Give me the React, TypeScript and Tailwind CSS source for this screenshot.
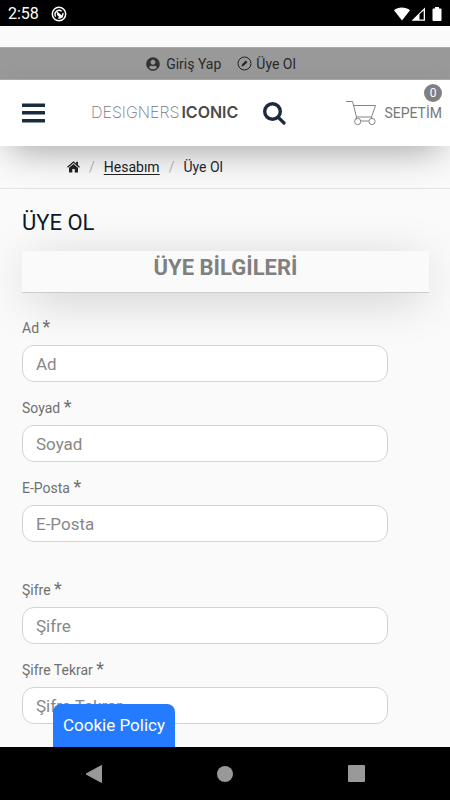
import React from "react";
import { FaUserCircle } from "react-icons/fa";

interface Field {
  id: string;
  label: string;
  type: string;
}

const personalFields: Field[] = [
  { id: "firstname", label: "Ad", type: "text" },
  { id: "lastname", label: "Soyad", type: "text" },
  { id: "email", label: "E-Posta", type: "email" },
];

const passwordFields: Field[] = [
  { id: "password", label: "Şifre", type: "password" },
  { id: "confirm", label: "Şifre Tekrar", type: "password" },
];

const StatusBar = () => (
  <div className="flex h-[26px] shrink-0 items-center bg-black px-2 pt-px text-white">
    <span className="text-base leading-5">2:58</span>
    <svg className="ml-3 size-4" viewBox="0 0 16 16" fill="none" stroke="currentColor">
      <circle cx="8" cy="8" r="6.7" strokeWidth="1.5" />
      <path d="M4.7 10.6a4.1 4.1 0 0 1 6-5.4M11.8 7a4.1 4.1 0 0 1-4.6 5" strokeWidth="1.4" />
      <path d="M6 6.3l5.6 4.9M6.3 8.2l3.2 2.9" strokeWidth="1.6" />
    </svg>
    <svg className="ml-auto h-4 w-[50px]" viewBox="0 0 50 16" fill="currentColor">
      <path d="M2 4.300C6 .6 13.500 .6 18 4.300L10 14.500z" />
      <path d="M33 1.500V14.700H19.500z" />
      <path d="M27.500 8.300L31.700 4.500V13.400H27.500z" fill="#000" />
      <path d="M43 2.500V1h4v1.500h1.500a1 1 0 0 1 1 1V14a1 1 0 0 1-1 1h-7a1 1 0 0 1-1-1V3.500a1 1 0 0 1 1-1z" />
    </svg>
  </div>
);

const MenuIcon = () => (
  <svg width="23" height="20" viewBox="0 0 23 20" fill="#1b2a3c">
    <rect y="0.500" width="23" height="3.500" rx="0.500" />
    <rect y="8" width="23" height="3.500" rx="0.500" />
    <rect y="16" width="23" height="3.500" rx="0.500" />
  </svg>
);

const SearchIcon = () => (
  <svg width="23" height="23" viewBox="0 0 23 23" fill="none" stroke="#1b2a3c">
    <circle cx="9.5" cy="9.500" r="7.800" strokeWidth="3.400" />
    <path d="M15.300 15.300L21 21" strokeWidth="3.200" strokeLinecap="round" />
  </svg>
);

const CartIcon = () => (
  <svg width="30" height="26" viewBox="0 0 30 26" fill="none" stroke="#777" strokeWidth="0.9">
    <path d="M0 1.500H6.500L10.500 17H25.500L29.500 5.500H7.500" />
    <path d="M10.500 17L9.800 19.500M25.500 17L26 18.500M14.800 21H22.800" />
    <circle cx="11.700" cy="21.500" r="3.100" />
    <circle cx="26" cy="21.500" r="3.100" />
  </svg>
);

const PencilCircleIcon = () => (
  <svg width="15" height="15" viewBox="0 0 15 15" fill="none" stroke="#222">
    <circle cx="7.500" cy="7.500" r="6.500" />
    <path d="M5.700 9.300L9.600 5.400" strokeWidth="2.200" />
    <path d="M4.300 10.700L5.200 8.500L6.500 9.800z" fill="#222" stroke="none" />
  </svg>
);

const HomeIcon = () => (
  <svg width="13" height="12" viewBox="0 0 13 12" fill="#222">
    <path d="M0.500 6.200L6.500 1L12.500 6.200" fill="none" stroke="#222" strokeWidth="1.300" />
    <path d="M9.200 0.800H11V4.500L9.200 3z" />
    <path d="M2 6.800L6.500 3L11 6.800V11.500H7.700V8H5.300V11.500H2z" />
  </svg>
);

const FieldGroup = ({ fields }: { fields: Field[] }) => (
  <div className="flex flex-col gap-[15px]">
    {fields.map((field) => (
      <div key={field.id}>
        <label htmlFor={field.id} className="mb-2 block h-5 text-sm leading-5 text-[#707070]">
          {field.label} <span className="text-lg leading-5">*</span>
        </label>
        <input
          id={field.id}
          type={field.type}
          placeholder={field.label}
          className="block h-[37px] w-9/10 rounded-xl border border-[#d3d3d3] bg-white px-[13px] text-[17px] text-[#555] placeholder:text-[#888]"
        />
      </div>
    ))}
  </div>
);

const App: React.FC = () => {
  return (
    <div className="flex h-screen flex-col bg-[#fafafa] font-[Roboto,sans-serif]">
      <StatusBar />

      <div className="relative flex-1 overflow-hidden">
        <nav className="mt-[21px] flex h-[33px] items-center justify-center gap-4 border-y border-[#aaa] bg-[#999] pr-2 text-sm text-[#2a2a2a]">
          <a href="#giris" className="flex items-center gap-1.5">
            <FaUserCircle className="size-3.5 text-[#333]" />
            Giriş Yap
          </a>
          <a href="#uye-ol" className="flex items-center gap-1">
            <PencilCircleIcon />
            Üye Ol
          </a>
        </nav>

        <header className="relative flex h-[66px] items-center bg-white pl-[22px] pr-2 shadow-[0_14px_36px_-10px_rgba(0,0,0,0.36)]">
          <button type="button" aria-label="Menü">
            <MenuIcon />
          </button>
          <a href="#anasayfa" className="ml-[46px] flex items-center gap-0.5 pb-0.5 font-[Inter,sans-serif] text-base leading-6">
            <span className="font-extralight text-[#777]">DESIGNERS</span>
            <span className="font-semibold text-[#4a4a4a]">ICONIC</span>
          </a>
          <button type="button" aria-label="Ara" className="ml-[25px]">
            <SearchIcon />
          </button>
          <a href="#sepet" className="relative ml-auto flex items-center gap-2 text-sm text-[#777]">
            <CartIcon />
            SEPETİM
            <span className="absolute -top-4 right-0 flex size-[18px] items-center justify-center rounded-full bg-[#808080] text-xs text-white">
              0
            </span>
          </a>
        </header>

        <nav className="border-b border-[#e3e3e3]">
          <ol className="flex h-[42px] items-center gap-[9px] pl-[67px] text-sm">
            <li>
              <a href="#anasayfa" aria-label="Ana Sayfa">
                <HomeIcon />
              </a>
            </li>
            <li className="text-[#bbb]">/</li>
            <li>
              <a href="#hesabim" className="text-[#222] underline underline-offset-2">
                Hesabım
              </a>
            </li>
            <li className="text-[#bbb]">/</li>
            <li className="text-[#1b2a3c]">Üye Ol</li>
          </ol>
        </nav>

        <main className="pt-5 pr-[21px] pl-[22px]">
          <h1 className="text-[22px] leading-7 text-[#0c1a2c]">ÜYE OL</h1>
          <h2 className="mt-3.5 h-[42px] border-b border-[#ccc] bg-[#fafafa] text-center text-[22px] leading-[34px] font-bold text-[#808080] shadow-[0_8px_50px_-8px_rgba(0,0,0,0.28)]">
            ÜYE BİLGİLERİ
          </h2>
          <form className="mt-6 flex flex-col gap-[37px]">
            <FieldGroup fields={personalFields} />
            <FieldGroup fields={passwordFields} />
          </form>
        </main>

        <button
          type="button"
          className="absolute bottom-0 left-[53px] h-[43px] rounded-t-lg bg-[#247bff] px-2.5 text-[17px] text-white"
        >
          Cookie Policy
        </button>
      </div>

      <div className="flex h-[53px] shrink-0 items-center justify-around bg-black px-7">
        <button type="button" aria-label="Geri">
          <svg width="18" height="18" viewBox="0 0 18 18" fill="#999">
            <path d="M16.500 0.500V17.500L1 9z" stroke="#999" strokeLinejoin="round" />
          </svg>
        </button>
        <button type="button" aria-label="Ana ekran" className="size-4 rounded-full bg-[#999]" />
        <button type="button" aria-label="Son uygulamalar" className="size-[17px] rounded-[1px] bg-[#999]" />
      </div>
    </div>
  );
};

export default App;
